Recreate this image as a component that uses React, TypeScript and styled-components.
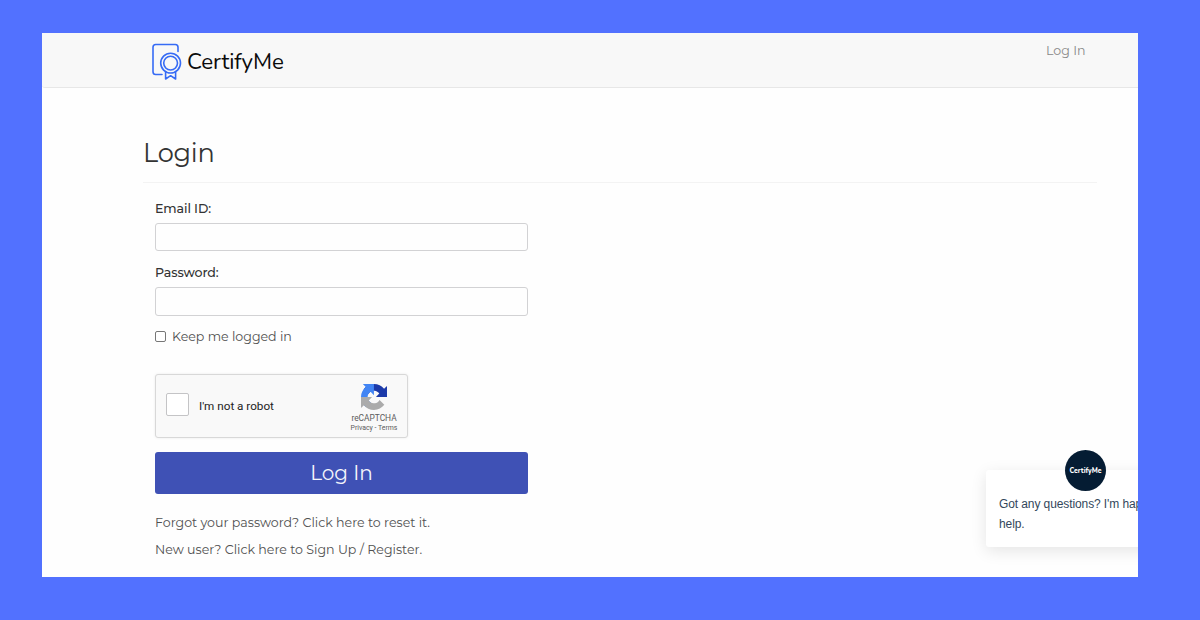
import React from "react";
import styled, { createGlobalStyle } from "styled-components";

const GlobalStyle = createGlobalStyle`
  * { box-sizing: border-box; }
  body { margin: 0; background: #5271ff; }
`;

const Backdrop = styled.div`
  width: 1200px;
  height: 620px;
  padding: 33px 62.5px 43px 42px;
  background: #5271ff;
  font-family: Montserrat, Inter, sans-serif;
`;

const Page = styled.div`
  position: relative;
  display: flex;
  flex-direction: column;
  height: 544px;
  overflow: hidden;
  background: #fefefe;
`;

const Header = styled.header`
  display: flex;
  justify-content: space-between;
  align-items: flex-start;
  flex: none;
  height: 55px;
  padding: 10px 52px 0 110px;
  background: #f8f8f8;
  border-bottom: 1px solid #e7e7e7;
  border-radius: 0 0 0 3px;
`;

const Brand = styled.a`
  display: flex;
  color: #0b0b0b;
`;

const BrandName = styled.span`
  margin: 4px 0 0 5px;
  font: 450 22.3px/30px Nunito, Lato, sans-serif;
  letter-spacing: -0.08px;
`;

const NavLink = styled.a`
  font-size: 12.6px;
  line-height: 16px;
  letter-spacing: 0;
  color: #888;
`;

const Main = styled.main`
  display: flex;
  flex-direction: column;
  padding: 48px 41px 0 101px;
`;

const Title = styled.h1`
  margin: 0;
  height: 47px;
  font-size: 25.6px;
  font-weight: 380;
  line-height: 34px;
  letter-spacing: -0.2px;
  color: #333;
  border-bottom: 1px solid #f3f3f3;
`;

const Form = styled.form`
  display: flex;
  flex-direction: column;
  width: 385px;
  padding: 17px 0 0 12px;
`;

const Label = styled.label`
  height: 23px;
  font-size: 12.6px;
  font-weight: 500;
  line-height: 18px;
  letter-spacing: -0.1px;
  color: #333;
`;

const Input = styled.input<{ $tall?: boolean }>`
  width: 373px;
  height: ${(p) => (p.$tall ? 29 : 28)}px;
  margin: 0 0 ${(p) => (p.$tall ? 12 : 13)}px;
  padding: 4px 9px;
  background: #fefefe;
  border: 1px solid #d2d2d4;
  border-radius: 3px;
  outline: none;
`;

const KeepRow = styled.label`
  display: flex;
  align-items: center;
  height: 18px;
  margin-top: -1px;
  gap: 6px;
  font-size: 12.6px;
  letter-spacing: 0;
  color: #505050;
`;

const Checkbox = styled.input<{ $size: number }>`
  appearance: none;
  flex: none;
  width: ${(p) => p.$size}px;
  height: ${(p) => p.$size}px;
  margin: 0;
  background: #fff;
  border: ${(p) => (p.$size > 15 ? "1.5px solid #c4c4c6" : "1px solid #777")};
  border-radius: 2px;
`;

const Captcha = styled.div`
  display: flex;
  align-items: flex-start;
  width: 253px;
  height: 64px;
  margin-top: 29px;
  padding: 0 9px 0 10px;
  background: #f9f9f9;
  border: 1px solid #d8d8d8;
  border-radius: 3px;
  box-shadow: 0 0 3px rgba(0, 0, 0, 0.08);
  font-family: Roboto, sans-serif;
`;

const CaptchaCheck = styled.label`
  display: flex;
  align-items: center;
  gap: 10px;
  flex: 1;
  height: 59px;
  font-size: 11.7px;
  color: #222;
`;

const CaptchaLabel = styled.span`
  padding-top: 2px;
`;

const CaptchaBrand = styled.div`
  display: flex;
  flex-direction: column;
  align-items: center;
  width: 48px;
  padding-top: 9px;
  color: #5c5c5c;
`;

const CaptchaText = styled.span<{ $small?: boolean }>`
  margin-top: ${(p) => (p.$small ? 0 : 3)}px;
  font-size: ${(p) => (p.$small ? 6.9 : 8.4)}px;
  line-height: ${(p) => (p.$small ? 8 : 11)}px;
  white-space: nowrap;
`;

const SubmitButton = styled.button`
  width: 373px;
  height: 42px;
  margin: 14px 0 20px;
  padding: 0;
  font: 400 20px/42px Montserrat, Inter, sans-serif;
  letter-spacing: 0;
  color: #f4f5fb;
  background: #3f51b5;
  border: 0;
  border-radius: 3px;
`;

const TextLink = styled.a`
  height: 27px;
  font-size: 12.6px;
  line-height: 18px;
  white-space: nowrap;
  color: #505050;
`;

const Chat = styled.aside`
  position: absolute;
  left: 944px;
  top: 437px;
  width: 230px;
  height: 77px;
  padding: 24px 14px 0 13px;
  background: #fff;
  border-radius: 3px;
  box-shadow: 0 4px 16px rgba(0, 0, 0, 0.1);
  font: 12px/20px "Liberation Sans", sans-serif;
  letter-spacing: -0.1px;
  color: #33475b;
  white-space: nowrap;
`;

const Avatar = styled.div`
  position: absolute;
  left: 79px;
  top: -20px;
  display: flex;
  align-items: center;
  justify-content: center;
  width: 41px;
  height: 41px;
  border-radius: 50%;
  background: #051c33;
  color: #fff;
  font: 800 6.9px/10px Nunito, Lato, sans-serif;
  letter-spacing: 0;
`;

const CertificateIcon = () => (
  <svg width="30" height="38" viewBox="0 0 30 38" fill="none" stroke="#366bf5" strokeWidth="1.6" strokeLinecap="round" strokeLinejoin="round">
    <path d="M26 8.5V4.2A2.7 2.7 0 0 0 23.3 1.5H3.7A2.7 2.7 0 0 0 1 4.2V28.8a2.7 2.7 0 0 0 2.7 2.7H10" />
    <circle cx="18.6" cy="20.1" r="9.9" />
    <circle cx="18.6" cy="20.1" r="6.9" />
    <path d="M13.6 29v7l5-3.3 5 3.3v-7" />
  </svg>
);

const RecaptchaIcon = () => (
  <svg width="26" height="26" viewBox="0 0 64 64">
    <path fill="#1c3aa9" d="M64 31.955l-.033-1.37V4.687l-7.16 7.16C50.948 4.674 42.033.093 32.05.093c-10.4 0-19.622 4.96-25.458 12.64l11.736 11.86a15.55 15.55 0 0 1 4.754-5.334c2.05-1.6 4.952-2.906 8.968-2.906.485 0 .86.057 1.135.163 4.976.393 9.288 3.14 11.828 7.124l-8.307 8.307L64 31.953" />
    <path fill="#4285f4" d="M31.862.094l-1.37.033H4.594l7.16 7.16C4.58 13.147 0 22.06 0 32.046c0 10.4 4.96 19.622 12.64 25.458L24.5 45.768a15.55 15.55 0 0 1-5.334-4.754c-1.6-2.05-2.906-4.952-2.906-8.968 0-.485.057-.86.163-1.135.393-4.976 3.14-9.288 7.124-11.828l8.307 8.307L31.86.095" />
    <path fill="#ababab" d="M.001 32.045l.033 1.37v25.898l7.16-7.16c5.86 7.173 14.774 11.754 24.76 11.754 10.4 0 19.622-4.96 25.458-12.64l-11.736-11.86a15.55 15.55 0 0 1-4.754 5.334c-2.05 1.6-4.952 2.906-8.968 2.906-.485 0-.86-.057-1.135-.163-4.976-.393-9.288-3.14-11.828-7.124l8.307-8.307c-10.522.04-22.4.066-27.295-.005" />
  </svg>
);

export default function App() {
  return (
    <Backdrop>
      <GlobalStyle />
      <Page>
        <Header>
          <Brand>
            <CertificateIcon />
            <BrandName>CertifyMe</BrandName>
          </Brand>
          <NavLink>Log In</NavLink>
        </Header>
        <Main>
          <Title>Login</Title>
          <Form>
            <Label htmlFor="email">Email ID:</Label>
            <Input id="email" type="email" />
            <Label htmlFor="password">Password:</Label>
            <Input id="password" type="password" $tall />
            <KeepRow>
              <Checkbox type="checkbox" $size={11} />
              Keep me logged in
            </KeepRow>
            <Captcha>
              <CaptchaCheck>
                <Checkbox type="checkbox" $size={23} />
                <CaptchaLabel>I'm not a robot</CaptchaLabel>
              </CaptchaCheck>
              <CaptchaBrand>
                <RecaptchaIcon />
                <CaptchaText>reCAPTCHA</CaptchaText>
                <CaptchaText $small>Privacy - Terms</CaptchaText>
              </CaptchaBrand>
            </Captcha>
            <SubmitButton type="button">Log In</SubmitButton>
            <TextLink>Forgot your password? Click here to reset it.</TextLink>
            <TextLink>New user? Click here to Sign Up / Register.</TextLink>
          </Form>
        </Main>
        <Chat>
          <Avatar>CertifyMe</Avatar>
          Got any questions? I'm happy to
          <br />
          help.
        </Chat>
      </Page>
    </Backdrop>
  );
}
